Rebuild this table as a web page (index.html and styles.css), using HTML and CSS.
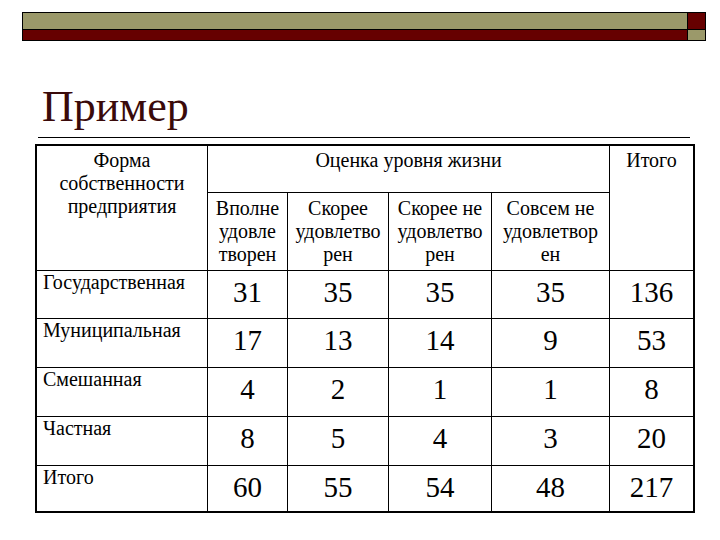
FILE: index.html
```html
<!DOCTYPE html>
<html lang="ru">
<head>
<meta charset="utf-8">
<link rel="stylesheet" href="styles.css">
</head>
<body>
<div class="slide">
  <div class="topbar">
    <div class="bar-main">
      <div class="seg olive"></div>
      <div class="seg red low"></div>
    </div>
    <div class="bar-end">
      <div class="seg red"></div>
      <div class="seg olive low"></div>
    </div>
  </div>
  <h1 class="title">Пример</h1>
  <div class="rule"></div>
  <div class="grid">
    <div class="cell hd h-form">Форма<br>собственности<br>предприятия</div>
    <div class="cell hd h-eval">Оценка уровня жизни</div>
    <div class="cell hd h-total">Итого</div>
    <div class="cell hd sub s1">Вполне<br>удовле<br>творен</div>
    <div class="cell hd sub s2">Скорее<br>удовлетво<br>рен</div>
    <div class="cell hd sub s3">Скорее не<br>удовлетво<br>рен</div>
    <div class="cell hd sub s4">Совсем не<br>удовлетвор<br>ен</div>

    <div class="cell name">Государственная</div>
    <div class="cell num">31</div><div class="cell num">35</div><div class="cell num">35</div><div class="cell num">35</div><div class="cell num">136</div>

    <div class="cell name">Муниципальная</div>
    <div class="cell num">17</div><div class="cell num">13</div><div class="cell num">14</div><div class="cell num">9</div><div class="cell num">53</div>

    <div class="cell name">Смешанная</div>
    <div class="cell num">4</div><div class="cell num">2</div><div class="cell num">1</div><div class="cell num">1</div><div class="cell num">8</div>

    <div class="cell name">Частная</div>
    <div class="cell num">8</div><div class="cell num">5</div><div class="cell num">4</div><div class="cell num">3</div><div class="cell num">20</div>

    <div class="cell name">Итого</div>
    <div class="cell num">60</div><div class="cell num">55</div><div class="cell num">54</div><div class="cell num">48</div><div class="cell num">217</div>
  </div>
</div>
</body>
</html>
```
FILE: styles.css
```css
html, body {
  margin: 0;
  padding: 0;
  background: #ffffff;
}
.slide {
  width: 720px;
  height: 540px;
  font-family: "Liberation Serif", "Times New Roman", serif;
  color: #000;
  overflow: hidden;
}
.topbar {
  display: flex;
  margin: 12px 0 0 22px;
  width: 684px;
  height: 29px;
}
.bar-main {
  flex: 1;
  display: flex;
  flex-direction: column;
}
.bar-end {
  width: 18px;
  display: flex;
  flex-direction: column;
}
.seg {
  box-sizing: border-box;
  border: 1px solid #000;
  height: 18px;
}
.seg.low {
  height: 11px;
  border-top: none;
}
.bar-end .seg {
  border-left: none;
}
.olive { background: #9b996a; }
.red { background: #660000; }

.title {
  margin: 41px 0 0 42px;
  font-family: "Liberation Serif", "Times New Roman", serif;
  font-weight: normal;
  font-size: 44px;
  line-height: 50px;
  color: #3a0a0a;
}
.rule {
  margin: 5px 0 0 38px;
  width: 652px;
  height: 1px;
  background: #000;
}
.grid {
  margin: 6px 0 0 35px;
  width: 656px;
  display: grid;
  grid-template-columns: 170px 79px 100px 102px 117px 83px;
  grid-template-rows: 46px 77px 47px 48px 48px 48px 45px;
  gap: 1px;
  background: #000;
  border: 2px solid #000;
  font-family: "Liberation Serif", "Times New Roman", serif;
}
.cell {
  background: #fff;
  font-family: "Liberation Serif", "Times New Roman", serif;
  font-size: 20px;
  line-height: 23px;
  color: #000;
  white-space: nowrap;
}
.hd {
  text-align: center;
}
.h-form {
  grid-column: 1;
  grid-row: 1 / 3;
  padding-top: 3px;
}
.h-eval {
  grid-column: 2 / 6;
  grid-row: 1;
  padding-top: 3px;
}
.h-total {
  grid-column: 6;
  grid-row: 1 / 3;
  padding-top: 3px;
}
.sub {
  grid-row: 2;
  padding-top: 4px;
}
.s1 { grid-column: 2; }
.s2 { grid-column: 3; }
.s3 { grid-column: 4; }
.s4 { grid-column: 5; }
.name {
  padding: 0 0 0 6px;
}
.num {
  font-size: 29px;
  line-height: 32px;
  text-align: center;
  padding-top: 5px;
}
```
